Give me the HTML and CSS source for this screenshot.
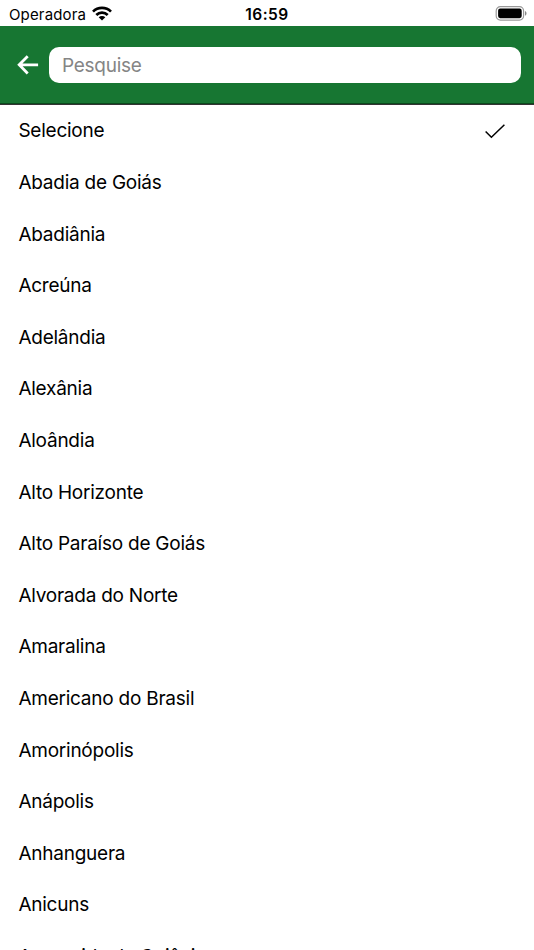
FILE: index.html
```html
<!DOCTYPE html>
<html lang="pt-BR">
<head>
<meta charset="utf-8">
<title>Selecione</title>
<link rel="stylesheet" href="styles.css">
</head>
<body>
<div class="status">
  <div class="carrier"><span class="carrier-name">Operadora</span>
    <svg class="wifi" width="20" height="15" viewBox="0 0 20 15"><g fill="none" stroke="#000" stroke-width="2.7"><path d="M1 5.6a12.8 12.8 0 0 1 18 0"/><path d="M4.3 9a8.1 8.1 0 0 1 11.4 0"/></g><path d="M6.7 11.3a4.7 4.7 0 0 1 6.6 0L10 14.6z"/></svg>
  </div>
  <span class="time">16:59</span>
  <svg class="battery" width="32" height="15" viewBox="0 0 32 15"><rect x="1.2" y=".7" width="27.4" height="13.4" rx="4.2" fill="none" stroke="#999" stroke-width="1.2"/><rect x="3.1" y="2.6" width="23.6" height="9.6" rx="2.1"/><path d="M30 5c2 .8 2 3.9 0 4.7z" fill="#888"/></svg>
</div>
<header class="header">
  <svg class="back" width="22" height="20" viewBox="0 0 22 20"><path d="M21.1 9.8H2.4M10.7 1.2L2.2 9.8l8.5 8.6" fill="none" stroke="#fff" stroke-width="2.8"/></svg>
  <div class="search">Pesquise</div>
</header>
<ul class="list">
  <li><span>Selecione</span><svg class="check" width="22" height="16" viewBox="0 0 22 16"><path d="M1.6 8.5l5.8 5.8L20.4 1.7" fill="none" stroke="#000" stroke-width="1.5"/></svg></li>
  <li><span>Abadia de Goiás</span></li>
  <li><span>Abadiânia</span></li>
  <li><span>Acreúna</span></li>
  <li><span>Adelândia</span></li>
  <li><span>Alexânia</span></li>
  <li><span>Aloândia</span></li>
  <li><span>Alto Horizonte</span></li>
  <li><span>Alto Paraíso de Goiás</span></li>
  <li><span>Alvorada do Norte</span></li>
  <li><span>Amaralina</span></li>
  <li><span>Americano do Brasil</span></li>
  <li><span>Amorinópolis</span></li>
  <li><span>Anápolis</span></li>
  <li><span>Anhanguera</span></li>
  <li><span>Anicuns</span></li>
  <li><span>Aparecida de Goiânia</span></li>
</ul>
</body>
</html>
```
FILE: styles.css
```css
* { box-sizing: border-box; }
body { margin: 0; height: 950px; overflow: hidden; background: #fff; color: #000; font-family: Inter, sans-serif; }
.status { height: 26px; display: grid; grid-template-columns: 1fr auto 1fr; align-items: center; padding: 0 7px 0 9px; font-size: 15px; }
.carrier { display: flex; align-items: center; gap: 6px; }
.carrier-name { padding-top: 2px; letter-spacing: .15px; }
.time { font-weight: 600; font-size: 15.5px; padding-top: 2px; letter-spacing: .5px; margin-right: 2px; }
.battery { justify-self: end; }
.header { height: 79px; background: #177632; border-bottom: 1px solid #333; box-shadow: inset 0 -1px #0b4a1c; display: flex; align-items: center; padding: 0 13px 0 17px; gap: 10px; }
.back { margin-bottom: 1px; }
.search { flex: 1; height: 36px; line-height: 34px; padding-top: 2px; border-radius: 10px; background: #fff; color: #858585; padding-left: 13px; font-size: 19px; letter-spacing: -.27px; }
.list { list-style: none; margin: 0; padding: 0; }
.list li { height: 51.62px; display: flex; align-items: center; justify-content: space-between; padding: 0 28px 0 18.4px; font-size: 19px; letter-spacing: -.24px; }
```
